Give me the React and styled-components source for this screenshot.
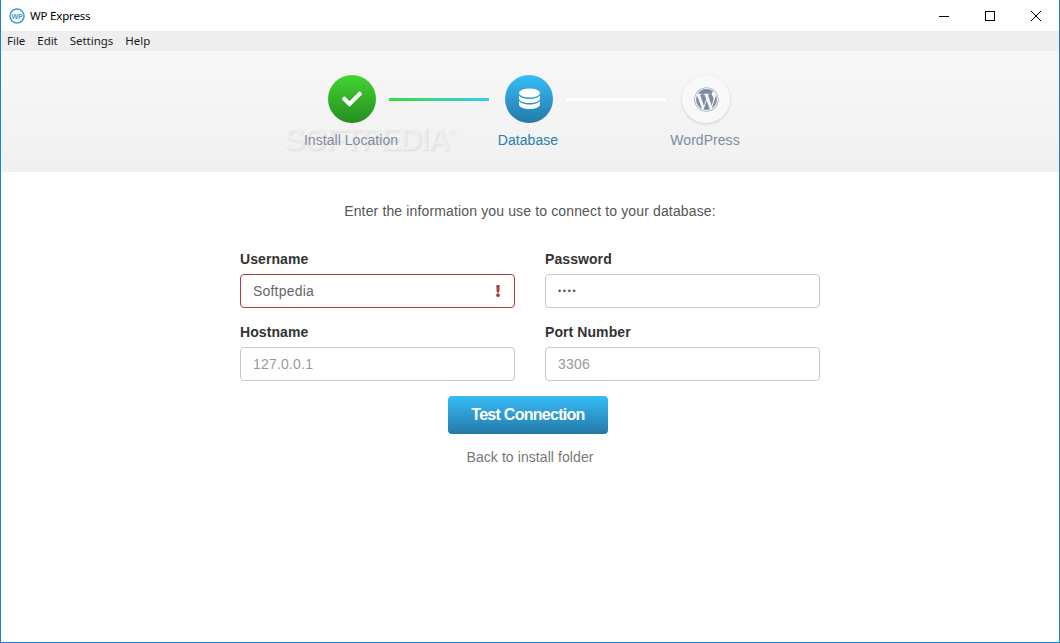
import React from "react";
import styled, { createGlobalStyle } from "styled-components";
import { FaCheck, FaWordpress, FaExclamation } from "react-icons/fa";

const Global = createGlobalStyle`
  html, body { margin: 0; padding: 0; width: 1060px; height: 643px; overflow: hidden; background: #fff; }
  * { box-sizing: border-box; }
`;
const Win = styled.div`
  position: relative; width: 1060px; height: 643px; border: 1px solid #1883d7; border-top: 0;
  background: #fff; display: flex; flex-direction: column; font-family: "Liberation Sans", Arial, sans-serif; overflow: hidden;
`;
const TitleBar = styled.div`
  height: 31px; flex: none; display: flex; align-items: center; padding-left: 8px;
  font: 11.5px "Noto Sans", "Open Sans", sans-serif; letter-spacing: -.18px; color: #000;
`;
const AppIcon = styled.svg`width: 16px; height: 16px; margin-right: 5px;`;
const Title = styled.span`flex: 1;`;
const WinBtn = styled.div`
  width: 46px; height: 31px; display: flex; align-items: center; justify-content: center;
`;
const Menu = styled.div`
  height: 20px; flex: none; background: #eeeeee; display: flex; align-items: center; gap: 12px; padding: 0 0 2px 6px;
  font: 11.5px "Noto Sans", "Open Sans", sans-serif; color: #1a1a1a; letter-spacing: -.03px;
`;
const Header = styled.div`
  height: 121px; flex: none; display: flex; justify-content: center; padding: 24px 2px 0 0;
  background: linear-gradient(#f8f8f8, #f0f0f0);
`;
const Step = styled.div`
  width: 48px; display: flex; flex-direction: column; align-items: center;
`;
const Circle = styled.div`
  width: 48px; height: 48px; flex: none; border-radius: 50%; display: flex; align-items: center; justify-content: center;
  color: ${p => p.$fg}; background: ${p => p.$bg}; box-shadow: ${p => p.$shadow || "none"};
`;
const StepLabel = styled.div`
  margin-top: 9px; white-space: nowrap; font-size: 14px; line-height: 17px; position: relative; z-index: 1; left: -1px; letter-spacing: .05px; color: ${p => p.$color};
`;
const Line = styled.div`
  width: 100px; height: 3px; margin: 23px 16px 0 13px; background: ${p => p.$bg};
`;
const Watermark = styled.div`
  position: absolute; left: 283px; top: 122px; font-size: 31px; line-height: 36px; font-weight: 700; letter-spacing: -1.4px;
  color: rgba(255,255,255,.5); text-shadow: 1px 1px 2px rgba(0,0,0,.1); pointer-events: none;
`;
const Reg = styled.sup`font-size: 9px; font-weight: 400; vertical-align: 15px; line-height: 0; letter-spacing: 0;`;
const Main = styled.div`
  flex: 1; display: flex; flex-direction: column; align-items: center; padding-top: 31px;
`;
const Intro = styled.p`
  margin: 0 0 31px; font-size: 14px; line-height: 17px; color: #555; letter-spacing: .14px;
`;
const Form = styled.div`
  width: 580px; display: grid; grid-template-columns: 275px 275px; column-gap: 30px; row-gap: 16px;
`;
const Field = styled.div`display: flex; flex-direction: column;`;
const Label = styled.label`
  font-size: 14px; font-weight: 700; line-height: 17px; color: #333; letter-spacing: .08px; margin-bottom: 6px;
`;
const InputBox = styled.div`
  height: 34px; border: 1px solid ${p => p.$error ? "#b23b3b" : "#c8c8c8"}; border-radius: 4px; background: #fff;
  display: flex; align-items: center; justify-content: space-between; padding: 0 12px; font-size: 14px;
  color: ${p => p.$muted ? "#999" : "#666"}; letter-spacing: .2px;
`;
const Dots = styled.span`font-size: 9px; letter-spacing: 1.7px; color: #555;`;
const ErrIcon = styled.span`color: #a93c3c; display: flex; margin-right: -2px;`;
const Test = styled.button`
  margin-top: 15px; width: 160px; height: 38px; border: 0; border-radius: 4px; color: #fff; font: 700 16px "Liberation Sans", Arial, sans-serif;
  letter-spacing: -.72px; background: linear-gradient(#37bdf8, #2379a8); padding: 0; position: relative; left: -2px;
`;
const Back = styled.a`
  margin-top: 15px; font-size: 14px; line-height: 17px; color: #777; letter-spacing: .08px; position: relative;
`;
const DbIcon = styled.svg`width: 21px; height: 22px; fill: currentColor;`;

export default function App() {
  return (
    <Win>
      <Global />
      <TitleBar>
        <AppIcon viewBox="0 0 16 16">
          <circle cx="8" cy="8" r="7" fill="#fff" stroke="#3c9bd0" strokeWidth="1.5" />
          <text x="8" y="10.5" textAnchor="middle" fontSize="7" fontWeight="700" fill="#3c9bd0" fontFamily="Liberation Sans">WP</text>
        </AppIcon>
        <Title>WP Express</Title>
        <WinBtn>
          <svg width="10" height="10" viewBox="0 0 10 10"><path d="M0 5.5h10" stroke="#000" /></svg>
        </WinBtn>
        <WinBtn>
          <svg width="10" height="10" viewBox="0 0 10 10"><rect x=".5" y=".5" width="9" height="9" fill="none" stroke="#000" /></svg>
        </WinBtn>
        <WinBtn>
          <svg width="10" height="10" viewBox="0 0 10 10"><path d="M0 0l10 10M10 0L0 10" stroke="#000" /></svg>
        </WinBtn>
      </TitleBar>
      <Menu><span>File</span><span>Edit</span><span>Settings</span><span>Help</span></Menu>
      <Header>
        <Step>
          <Circle $fg="#fff" $bg="linear-gradient(#44d533, #248d1f)"><FaCheck size={20} /></Circle>
          <StepLabel $color="#7f8aa3">Install Location</StepLabel>
        </Step>
        <Line $bg="linear-gradient(90deg, #3cdc38, #36c8f8)" />
        <Step>
          <Circle $fg="#fff" $bg="linear-gradient(#37bdf8, #2379a8)">
            <DbIcon viewBox="0 0 21 21">
              <ellipse cx="10.5" cy="4.5" rx="10.5" ry="4.5" />
              <path d="M0 7v3c0 2.5 4.7 4.5 10.5 4.5S21 12.5 21 10V7c-1.6 2.2-5.6 3.5-10.5 3.5S1.6 9.2 0 7z" />
              <path d="M0 12.5v3.5c0 2.5 4.7 4.5 10.5 4.5S21 18.5 21 16v-3.5c-1.6 2.2-5.6 3.5-10.5 3.5S1.6 14.7 0 12.5z" />
            </DbIcon>
          </Circle>
          <StepLabel $color="#2a7ea8">Database</StepLabel>
        </Step>
        <Line $bg="#fff" />
        <Step>
          <Circle $fg="#7f8aa3" $bg="#f8f8f8" $shadow="0 1px 3px rgba(0,0,0,.15)"><FaWordpress size={25} /></Circle>
          <StepLabel $color="#7f8aa3">WordPress</StepLabel>
        </Step>
      </Header>
      <Watermark>SOFTPEDIA<Reg>®</Reg></Watermark>
      <Main>
        <Intro>Enter the information you use to connect to your database:</Intro>
        <Form>
          <Field>
            <Label>Username</Label>
            <InputBox $error>Softpedia<ErrIcon><FaExclamation size={12} /></ErrIcon></InputBox>
          </Field>
          <Field>
            <Label>Password</Label>
            <InputBox><Dots>••••</Dots></InputBox>
          </Field>
          <Field>
            <Label>Hostname</Label>
            <InputBox $muted>127.0.0.1</InputBox>
          </Field>
          <Field>
            <Label>Port Number</Label>
            <InputBox $muted>3306</InputBox>
          </Field>
        </Form>
        <Test>Test Connection</Test>
        <Back>Back to install folder</Back>
      </Main>
    </Win>
  );
}
